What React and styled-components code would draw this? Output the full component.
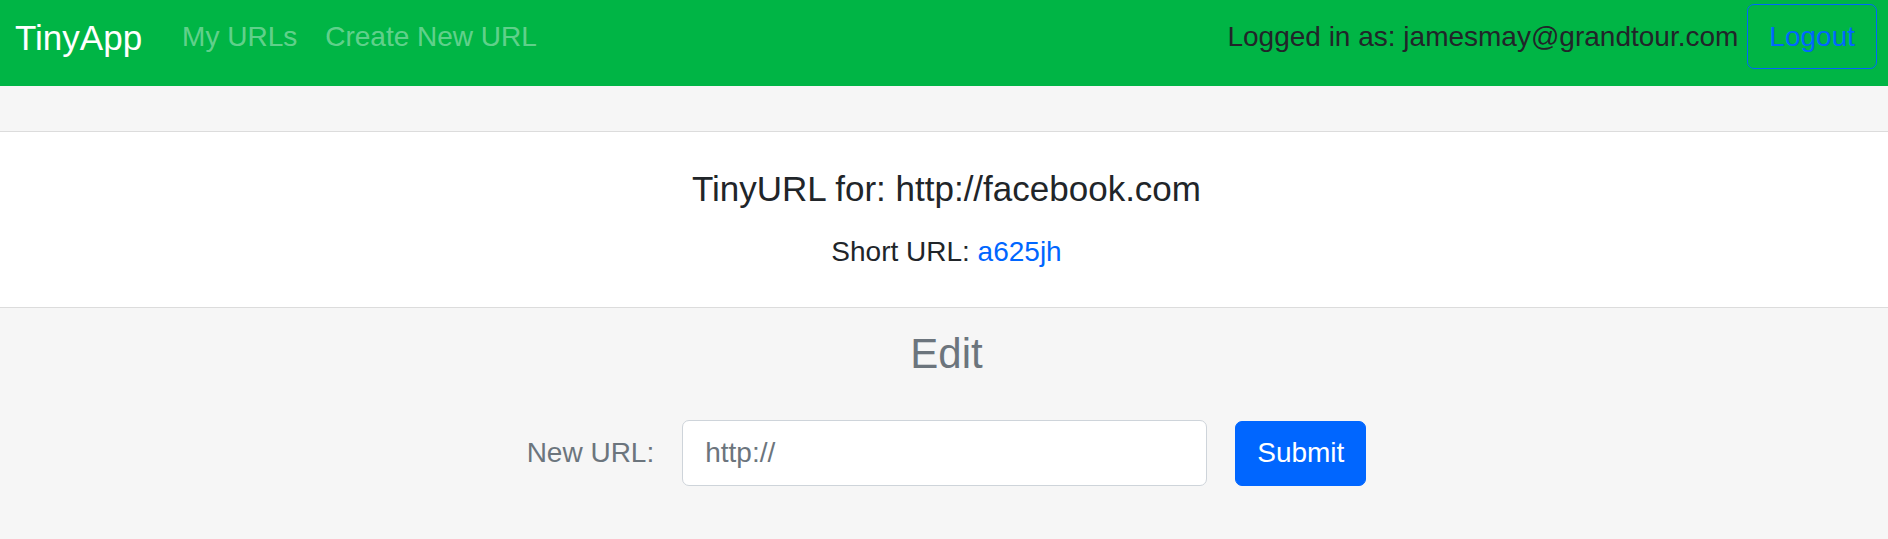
import React from 'react';
import styled, { createGlobalStyle } from 'styled-components';

const GlobalStyle = createGlobalStyle`
  html, body {
    margin: 0;
    padding: 0;
  }
  body {
    background: #f6f6f6;
    font-family: "Liberation Sans", Arial, sans-serif;
    font-size: 28px;
    line-height: 1.5;
    color: #212529;
  }
`;

const Navbar = styled.nav`
  display: flex;
  align-items: flex-start;
  height: 86px;
  box-sizing: border-box;
  padding: 4px 11px 0 15px;
  background: #00b545;
`;

const Brand = styled.a`
  margin-top: 8px;
  margin-right: 26px;
  font-size: 35px;
  line-height: 52px;
  color: #fff;
  text-decoration: none;
  white-space: nowrap;
`;

const NavLinks = styled.div`
  display: flex;
  flex: 1;
  margin-top: 12px;
`;

const NavLink = styled.a`
  padding: 0 14px;
  line-height: 42px;
  color: rgba(255, 255, 255, 0.4);
  text-decoration: none;
  white-space: nowrap;
`;

const UserText = styled.span`
  margin-top: 12px;
  margin-right: 9px;
  line-height: 42px;
  color: #212529;
  white-space: nowrap;
`;

const Button = styled.button`
  font-family: inherit;
  font-size: 28px;
  line-height: 42px;
  padding: 10.5px 21px;
  border-radius: 7px;
  cursor: pointer;
  border: 1px solid #0066ff;
  color: ${(p) => (p.$outline ? '#0066ff' : '#fff')};
  background: ${(p) => (p.$outline ? 'transparent' : '#0066ff')};
`;

const Card = styled.section`
  margin-top: 45px;
  background: #fff;
  border-top: 1px solid #dcdcdc;
  border-bottom: 1px solid #dcdcdc;
  padding: 36px 35px 34px 40px;
  text-align: center;
`;

const Title = styled.h5`
  margin: 0 0 21px;
  font-size: 35px;
  font-weight: 400;
  line-height: 1.2;
`;

const Text = styled.p`
  margin: 0;
`;

const Link = styled.a`
  color: #0066ff;
  text-decoration: none;
`;

const EditSection = styled.section`
  padding: 21px 0 0 5px;
  text-align: center;
`;

const EditTitle = styled.h4`
  margin: 0 0 41px;
  font-size: 42px;
  font-weight: 400;
  line-height: 1.2;
  color: #6c757d;
`;

const Form = styled.form`
  display: flex;
  justify-content: center;
  align-items: center;
  gap: 28px;
`;

const Label = styled.label`
  color: #6c757d;
`;

const Input = styled.input`
  box-sizing: border-box;
  width: 525px;
  height: 66px;
  padding: 10.5px 22px;
  font-family: inherit;
  font-size: 28px;
  color: #6c757d;
  background: #fff;
  border: 1px solid #ced4da;
  border-radius: 7px;
  outline: none;
`;

const App = () => {
  return (
    <>
      <GlobalStyle />
      <Navbar>
        <Brand href="#">TinyApp</Brand>
        <NavLinks>
          <NavLink href="#">My URLs</NavLink>
          <NavLink href="#">Create New URL</NavLink>
        </NavLinks>
        <UserText>Logged in as: jamesmay@grandtour.com</UserText>
        <Button $outline>Logout</Button>
      </Navbar>
      <Card>
        <Title>TinyURL for: http://facebook.com</Title>
        <Text>
          Short URL: <Link href="#">a625jh</Link>
        </Text>
      </Card>
      <EditSection>
        <EditTitle>Edit</EditTitle>
        <Form onSubmit={(e) => e.preventDefault()}>
          <Label htmlFor="longURL">New URL:</Label>
          <Input id="longURL" type="text" defaultValue="http://" />
          <Button type="submit">Submit</Button>
        </Form>
      </EditSection>
    </>
  );
};

export default App;
